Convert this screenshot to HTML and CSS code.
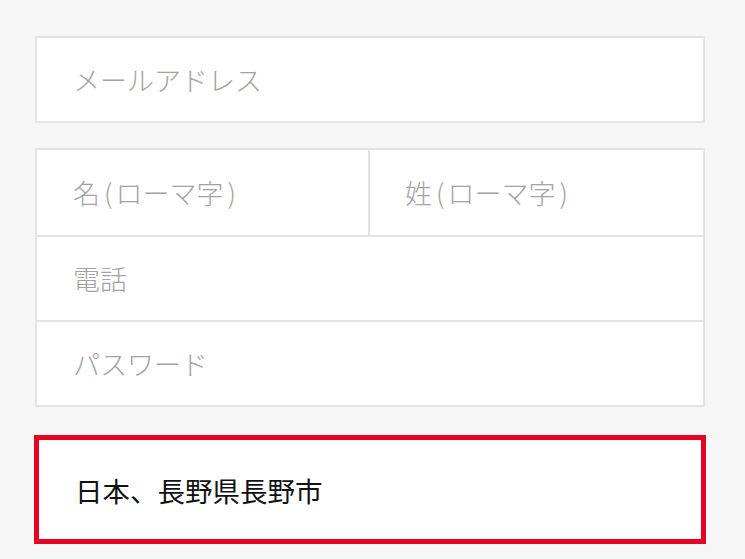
FILE: index.html
```html
<!DOCTYPE html>
<html lang="ja">
<head>
<meta charset="utf-8">
<link rel="stylesheet" href="styles.css">
</head>
<body>
<div class="form">
  <div class="box field">メールアドレス</div>
  <div class="box group">
    <div class="row split">
      <div class="field">名<span class="paren">(</span>ローマ字<span class="paren">)</span></div>
      <div class="field col2">姓<span class="paren">(</span>ローマ字<span class="paren">)</span></div>
    </div>
    <div class="row field">電話</div>
    <div class="row field">パスワード</div>
  </div>
  <div class="location">日本、長野県長野市</div>
</div>
</body>
</html>
```
FILE: styles.css
```css
html, body {
  margin: 0;
  padding: 0;
  background: #f6f6f6;
  font-family: "Noto Sans CJK JP", "Noto Sans", sans-serif;
}
.form {
  width: 670px;
  padding: 36px 0 0 35px;
  display: flex;
  flex-direction: column;
}
.box {
  background: #fff;
  border: 2px solid #e3e3e3;
}
.field {
  height: 85px;
  display: flex;
  align-items: center;
  padding-left: 36px;
  font-size: 27px;
  color: #a3a3a3;
  font-weight: 300;
  box-sizing: border-box;
}
.box.field {
  height: 87px;
}
.paren {
  padding: 0 3px 0 4px;
}
.group {
  margin-top: 25px;
  display: flex;
  flex-direction: column;
}
.row + .row {
  border-top: 2px solid #e3e3e3;
}
.split {
  display: grid;
  grid-template-columns: 331px 1fr;
}
.col2 {
  border-left: 2px solid #e3e3e3;
  padding-left: 35px;
}
.location {
  margin-top: 28px;
  margin-left: -1px;
  width: 672px;
  height: 109px;
  box-sizing: border-box;
  border: 5px solid #e60021;
  background: #fff;
  display: flex;
  align-items: center;
  padding-left: 36px;
  font-size: 27.5px;
  color: #111;
}
```
